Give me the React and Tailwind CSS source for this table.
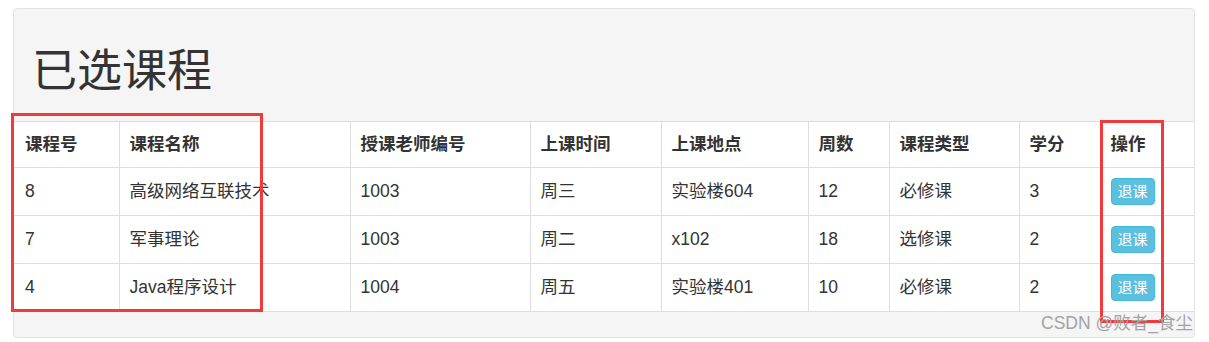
import React from 'react';

const columns = [
  { label: '课程号', w: 'w-[106px]' },
  { label: '课程名称', w: 'w-[231px]' },
  { label: '授课老师编号', w: 'w-[180px]' },
  { label: '上课时间', w: 'w-[131px]' },
  { label: '上课地点', w: 'w-[147px]' },
  { label: '周数', w: 'w-[81px]' },
  { label: '课程类型', w: 'w-[130px]' },
  { label: '学分', w: 'w-[81px]' },
  { label: '操作', w: 'w-[94px]' },
];

const courses = [
  { id: '8', name: '高级网络互联技术', teacher: '1003', time: '周三', place: '实验楼604', weeks: '12', type: '必修课', credit: '3' },
  { id: '7', name: '军事理论', teacher: '1003', time: '周二', place: 'x102', weeks: '18', type: '选修课', credit: '2' },
  { id: '4', name: 'Java程序设计', teacher: '1004', time: '周五', place: '实验楼401', weeks: '10', type: '必修课', credit: '2' },
];

const font = { fontFamily: '"Liberation Sans", "Noto Sans CJK SC", sans-serif' };

function Cell({ children, last, first }) {
  return (
    <td className={`h-[48px] pr-[10px] border-b border-[#ddd] text-left ${first ? 'pl-[12px]' : 'pl-[10px]'} ${last ? '' : 'border-r'}`}>
      {children}
    </td>
  );
}

export default function App() {
  return (
    <div className="bg-white w-[1209px] h-[342px] pt-[8px] pl-[13px]" style={font}>
      <div className="relative w-[1182px] bg-[#f5f5f5] border border-[#e3e3e3] rounded-[4px] pb-[25px]">
        <div className="h-[112px] flex items-center pl-[18px] pt-[12px]">
          <h1 className="text-[45px] leading-none text-[#333]">已选课程</h1>
        </div>
        <table className="w-[1181px] -ml-px bg-white border-collapse border-t border-[#ddd] text-[17.5px] text-[#333] table-fixed">
          <thead>
            <tr>
              {columns.map((c, i) => (
                <td key={c.label} className={`${c.w} h-[46px] pr-[10px] font-bold border-b border-[#ddd] ${i === 0 ? 'pl-[12px]' : 'pl-[10px]'} ${i === columns.length - 1 ? '' : 'border-r'}`}>
                  {c.label}
                </td>
              ))}
            </tr>
          </thead>
          <tbody>
            {courses.map(c => (
              <tr key={c.id}>
                <Cell first>{c.id}</Cell>
                <Cell>{c.name}</Cell>
                <Cell>{c.teacher}</Cell>
                <Cell>{c.time}</Cell>
                <Cell>{c.place}</Cell>
                <Cell>{c.weeks}</Cell>
                <Cell>{c.type}</Cell>
                <Cell>{c.credit}</Cell>
                <Cell last>
                  <button className="h-[27px] px-[6px] bg-[#5bc0de] border border-[#46b8da] rounded-[4px] text-white text-[15px] leading-none">
                    退课
                  </button>
                </Cell>
              </tr>
            ))}
          </tbody>
        </table>

        {/* annotation boxes */}
        <div className="absolute left-[-3px] top-[104px] w-[252px] h-[199px] border-[3px] border-[#f33a3a]" />
        <div className="absolute left-[1086px] top-[111px] w-[64px] h-[203px] border-[3px] border-[#f33a3a]" />

        <div className="absolute right-[1px] bottom-[5px] text-[17.5px] leading-none text-[#a3a3a3]">CSDN @败者_食尘</div>
      </div>
    </div>
  );
}
